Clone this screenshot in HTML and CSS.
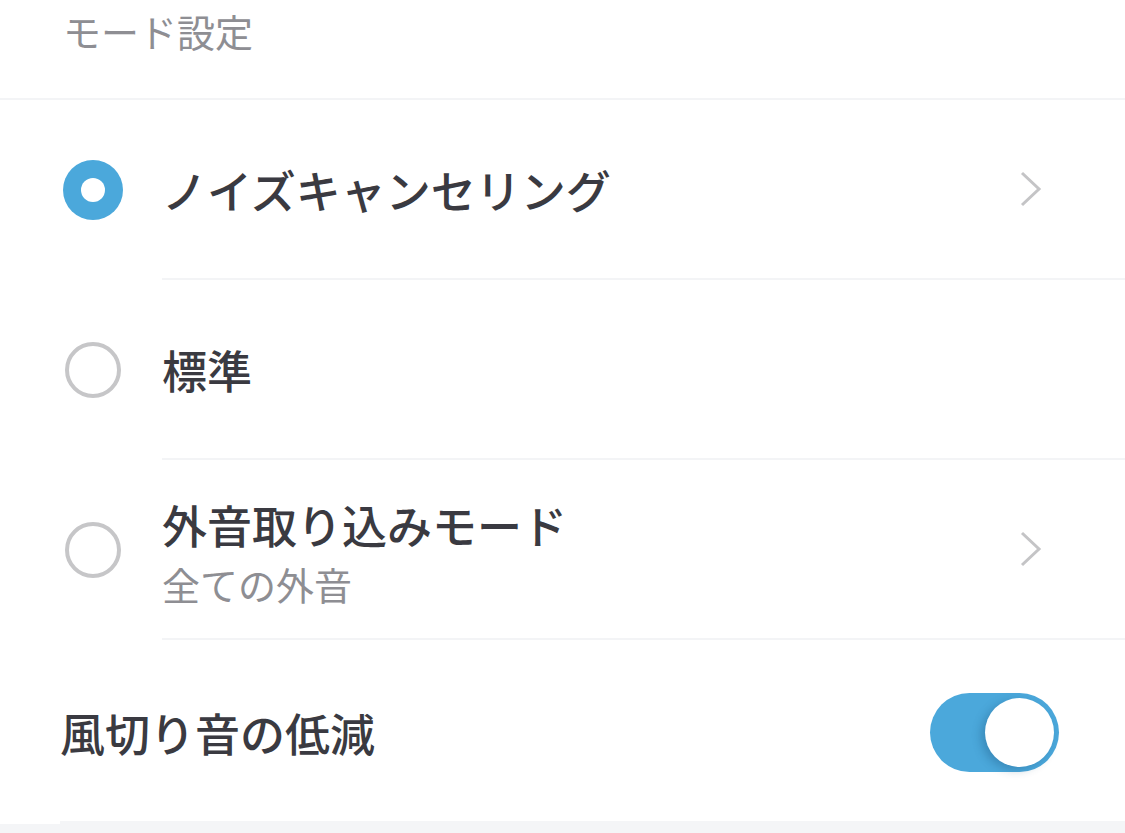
FILE: index.html
```html
<!DOCTYPE html>
<html lang="ja">
<head>
  <meta charset="UTF-8" />
  <meta name="viewport" content="width=device-width, initial-scale=1.0" />
  <title>モード設定</title>
  <link rel="stylesheet" href="styles.css">
</head>
<body>
  <div class="card">
    <div class="section-title">モード設定</div>

    <div class="mode-row">
      <div class="radio-cell"><span class="radio checked"></span></div>
      <div class="row-body">
        <div class="row-text"><div class="row-title">ノイズキャンセリング</div></div>
        <svg class="chevron" viewBox="0 0 24 36"><path d="M3 2 L20 18 L3 34" /></svg>
      </div>
    </div>

    <div class="mode-row">
      <div class="radio-cell"><span class="radio"></span></div>
      <div class="row-body">
        <div class="row-text"><div class="row-title">標準</div></div>
      </div>
    </div>

    <div class="mode-row">
      <div class="radio-cell"><span class="radio"></span></div>
      <div class="row-body">
        <div class="row-text two-line">
          <div class="row-title">外音取り込みモード</div>
          <div class="row-sub">全ての外音</div>
        </div>
        <svg class="chevron" viewBox="0 0 24 36"><path d="M3 2 L20 18 L3 34" /></svg>
      </div>
    </div>

    <div class="switch-row">
      <div class="row-title">風切り音の低減</div>
      <div class="toggle on"><span class="knob"></span></div>
    </div>
  </div>
</body>
</html>
```

FILE: styles.css
```css
body { margin: 0; background-color: #f4f5f7; font-family: "Noto Sans CJK JP", "Noto Sans", sans-serif; color: #3a3a41; }
.card { background-color: #fff; }
.section-title { height: 86px; padding: 12px 0 0 63px; font-size: 38px; line-height: 38px; color: #8e8e93; border-bottom: 2px solid #f3f4f6; }

.mode-row { display: flex; height: 180px; }
.radio-cell { width: 162px; display: flex; align-items: center; padding-left: 63px; box-sizing: border-box; }
.radio { width: 60px; height: 60px; box-sizing: border-box; border-radius: 50%; display: flex; align-items: center; justify-content: center; }
.radio::after { content: ""; width: 56px; height: 56px; box-sizing: border-box; border-radius: 50%; border: 4px solid #c6c6c8; }
.radio.checked { background-color: #4ba8db; }
.radio.checked::after { width: 24px; height: 24px; border: none; background-color: #fff; }

.row-body { flex: 1; display: flex; align-items: center; border-bottom: 2px solid #f3f4f6; padding-right: 82px; }
.row-text { flex: 1; }
.row-title { font-size: 45px; line-height: 45px; font-weight: 500; }
.two-line { padding-top: 6px; }
.row-sub { font-size: 38px; line-height: 38px; color: #8e8e93; margin-top: 18px; }
.chevron { width: 24px; height: 36px; fill: none; stroke: #c4c4c6; stroke-width: 3; }

.switch-row { display: flex; align-items: center; justify-content: space-between; height: 181px; margin-left: 60px; padding-right: 66px; border-bottom: 3px solid #f4f5f7; }
.switch-row .row-title { padding-top: 4px; }
.toggle { width: 129px; height: 79px; border-radius: 40px; background-color: #4ba8db; position: relative; margin-top: 3px; }
.knob { position: absolute; top: 5px; right: 5px; width: 69px; height: 69px; border-radius: 50%; background-color: #fff; box-shadow: -4px 3px 10px rgba(20, 70, 110, 0.3); }
```
